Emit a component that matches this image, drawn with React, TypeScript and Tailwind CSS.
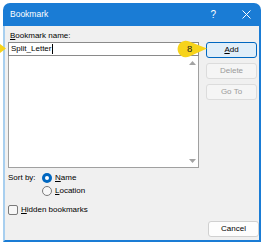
import React from "react";

const font = { fontFamily: '"Liberation Sans", Arial, sans-serif' };

function Btn({ children, primary, disabled }: { children: React.ReactNode; primary?: boolean; disabled?: boolean }) {
  return (
    <div
      className={
        "h-[16px] w-[51px] rounded-[3px] flex items-center justify-center text-[8px] leading-none " +
        (primary
          ? "bg-[#e0eef9] border border-[#0067c0] text-black"
          : disabled
          ? "bg-[#f5f5f5] border border-[#dcdcdc] text-[#9a9a9a]"
          : "bg-[#fdfdfd] border border-[#d0d0d0] text-black")
      }
    >
      {children}
    </div>
  );
}

export default function App() {
  return (
    <div className="relative w-[263px] h-[245px] bg-white pt-[3px] pl-[3px] overflow-hidden" style={font}>
      <div className="w-[258px] h-[239px] flex flex-col">
        {/* Title bar */}
        <div className="h-[23px] bg-[#1a7cd5] rounded-t-[7px] flex items-center pl-[7px] text-white text-[8.5px]">
          <span>Bookmark</span>
          <span className="ml-auto mr-[26px] text-[10px]">?</span>
          <svg width="9" height="9" viewBox="0 0 9 9" className="mr-[10px]">
            <path d="M0.5 0.5 L8.5 8.5 M8.5 0.5 L0.5 8.5" stroke="white" strokeWidth="1" />
          </svg>
        </div>
        {/* Body */}
        <div className="flex-1 flex flex-col bg-[#f0f0f0] border-l-2 border-l-[#a8cfef] border-r-2 border-r-[#1a7cd5] border-b-2 border-b-[#1a7cd5] pl-[3px] pt-[4px] pb-[3px] text-[8px] text-black">
          <div className="flex">
            <div className="w-[191px] flex flex-col">
              <div className="h-[12px] leading-[11px] pl-[2px]">
                <span className="underline">B</span>ookmark name:
              </div>
              <div className="h-[14px] bg-white border border-[#8a8a8a] flex items-center pl-[2px] leading-none">
                <span>Split_Letter</span>
                <span className="inline-block w-[1px] h-[10px] bg-black ml-[1px]" />
              </div>
              <div className="h-[112px] bg-white border-x border-b border-[#a0a0a0] flex justify-end">
                <div className="w-[12px] flex flex-col items-center justify-between pt-[5px] pb-[4px]">
                  <svg width="7" height="4" viewBox="0 0 7 4">
                    <path d="M3.5 0 L7 4 L0 4 Z" fill="#a3a3a3" />
                  </svg>
                  <svg width="7" height="4" viewBox="0 0 7 4">
                    <path d="M0 0 L7 0 L3.5 4 Z" fill="#a3a3a3" />
                  </svg>
                </div>
              </div>
              <div className="mt-[3px] h-[13px] flex items-center">
                <span className="w-[34px]">Sort by:</span>
                <span className="w-[10px] h-[10px] rounded-full bg-[#0067c0] flex items-center justify-center">
                  <span className="w-[4px] h-[4px] rounded-full bg-white" />
                </span>
                <span className="ml-[3px]">
                  <span className="underline">N</span>ame
                </span>
              </div>
              <div className="h-[13px] flex items-center pl-[34px]">
                <span className="w-[10px] h-[10px] rounded-full border border-[#7a7a7a] bg-[#f7f7f7]" />
                <span className="ml-[3px]">
                  <span className="underline">L</span>ocation
                </span>
              </div>
              <div className="mt-[6px] h-[13px] flex items-center">
                <span className="w-[10px] h-[10px] rounded-[2px] border border-[#7a7a7a] bg-[#f7f7f7]" />
                <span className="ml-[3px]">
                  <span className="underline">H</span>idden bookmarks
                </span>
              </div>
            </div>
            <div className="ml-[7px] mt-[12px] flex flex-col gap-[5px]">
              <Btn primary>
                <span className="underline">A</span>dd
              </Btn>
              <Btn disabled>Delete</Btn>
              <Btn disabled>Go To</Btn>
            </div>
          </div>
          <div className="mt-auto flex justify-end">
            <Btn>Cancel</Btn>
          </div>
        </div>
      </div>
      {/* Callouts */}
      <svg className="absolute left-0 top-0 pointer-events-none" width="263" height="245" viewBox="0 0 263 245">
        <path d="M207 48.5 L189.3 41.6 A8.2 8.2 0 1 0 189.3 56.4 Z" fill="#f7d31a" />
        <path d="M0 44 L6 48.5 L0 53 Z" fill="#f7d31a" />
      </svg>
      <div className="absolute left-[187px] top-[43px] text-[9.5px] leading-[11px] text-[#1b1b1b]">8</div>
    </div>
  );
}
